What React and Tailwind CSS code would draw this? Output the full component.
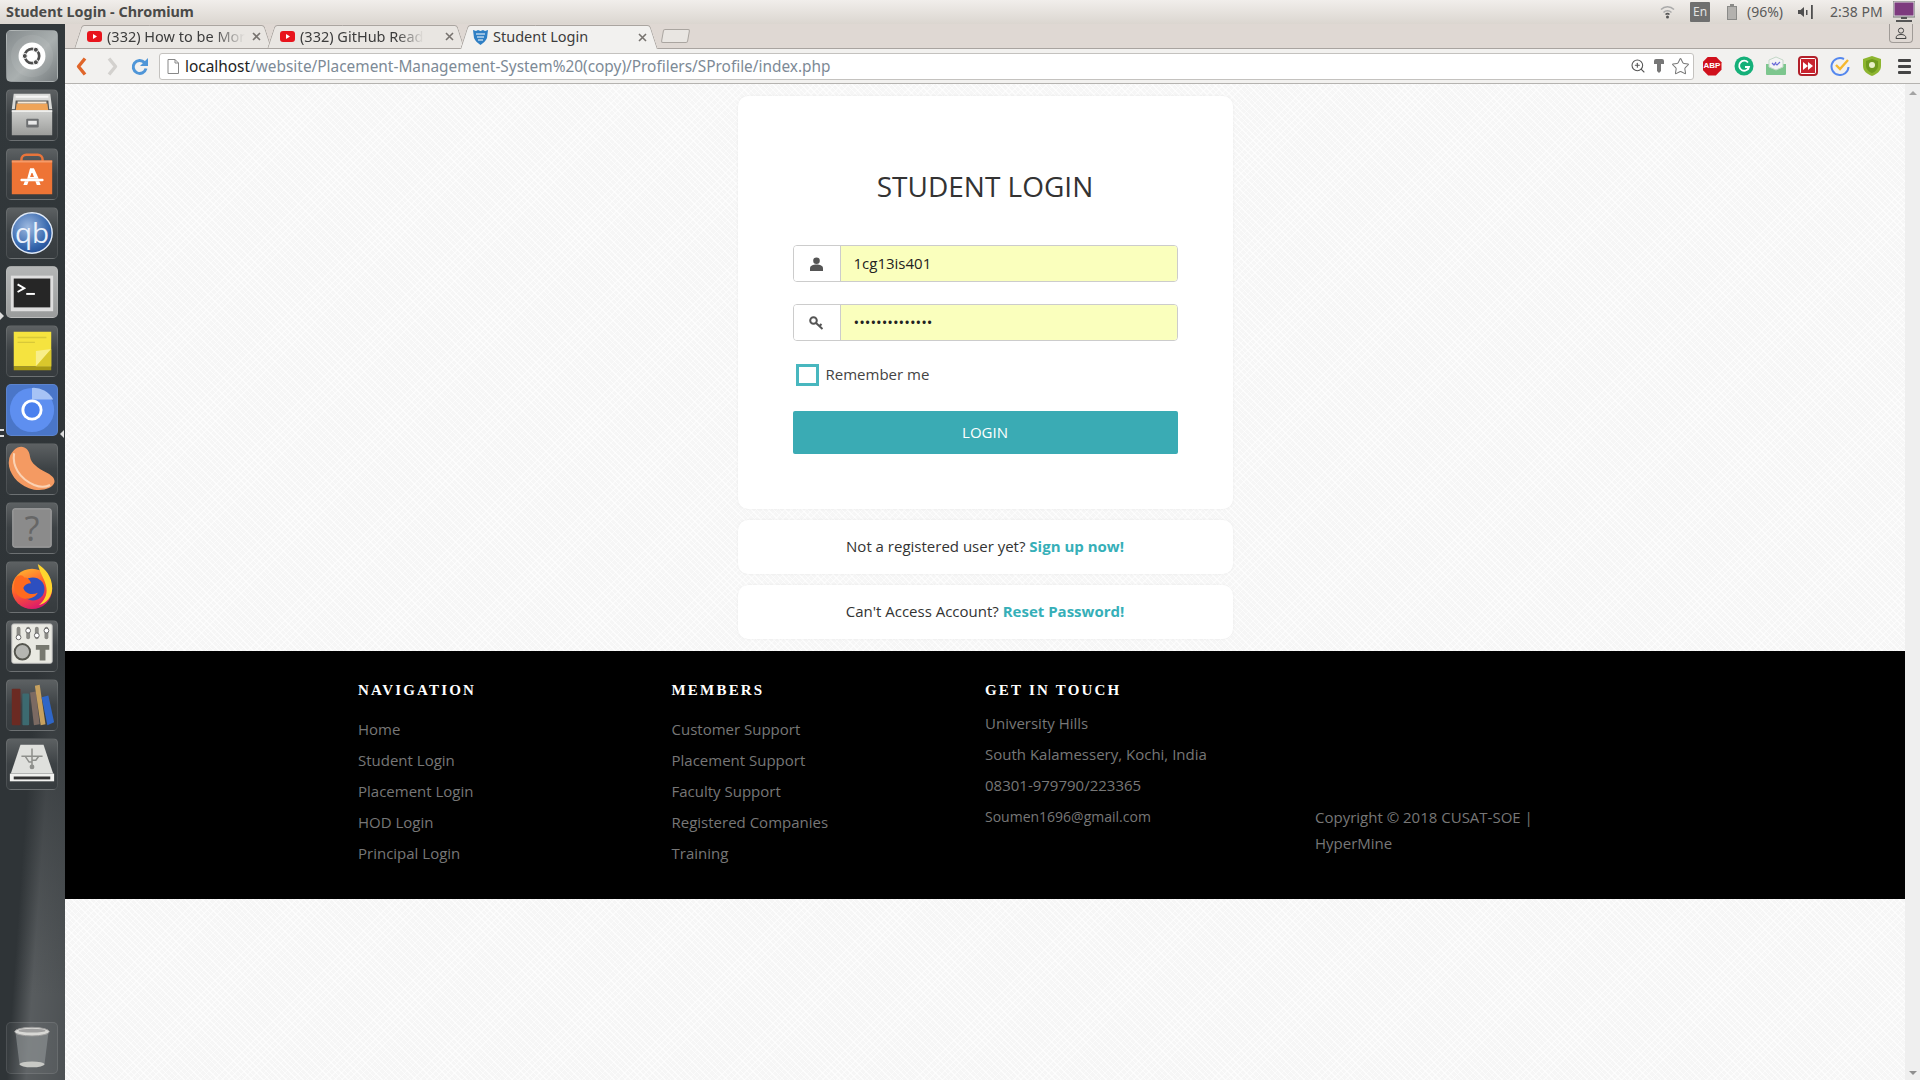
import { Star, ZoomIn } from "lucide-react";

const chromeFont = "font-['Noto_Sans','Open_Sans',sans-serif]";

const navLinks = ["Home", "Student Login", "Placement Login", "HOD Login", "Principal Login"];
const memberLinks = ["Customer Support", "Placement Support", "Faculty Support", "Registered Companies", "Training"];
const contactLines = ["University Hills", "South Kalamessery, Kochi, India", "08301-979790/223365"];

function Tile({ children, active, className = "" }) {
  return (
    <div
      className={`w-[52px] h-[52px] shrink-0 rounded-[5px] border border-white/10 overflow-hidden flex items-center justify-center ${
        active || "bg-[linear-gradient(180deg,#5d6163,#3d4245_50%,#363b3e)]"
      } ${className}`}
    >
      <svg width="52" height="52" viewBox="0 0 52 52">
        {children}
      </svg>
    </div>
  );
}

function Launcher() {
  return (
    <div className="w-[65px] shrink-0 flex flex-col gap-[7px] pt-[6px] pb-[6px] items-start pl-[6px] relative bg-[#2f3437] [background-image:linear-gradient(180deg,#32383b_0,#2f3437_58%,transparent_92%),linear-gradient(94deg,transparent_58%,rgba(255,255,255,0.2)_72%,rgba(255,255,255,0.14)_100%)]">
      <Tile active="bg-[linear-gradient(135deg,#868c8e,#aab0b0_55%,#777d7f)]">
        <circle cx="26" cy="26" r="22" fill="#fff" opacity=".07" />
        <circle cx="26" cy="26" r="14" fill="#fff" />
        <circle cx="26" cy="26" r="7.5" fill="none" stroke="#4d4d4d" strokeWidth="2.8" />
        <circle cx="18.500" cy="26" r="2.6" fill="#4d4d4d" stroke="#fff" />
        <circle cx="30" cy="19.500" r="2.6" fill="#4d4d4d" stroke="#fff" />
        <circle cx="30" cy="32.500" r="2.6" fill="#4d4d4d" stroke="#fff" />
      </Tile>
      <Tile>
        <defs>
          <linearGradient id="cab" x1="0" y1="0" x2="0" y2="1">
            <stop offset="0" stopColor="#cfd0ce" />
            <stop offset="1" stopColor="#9c9d9b" />
          </linearGradient>
        </defs>
        <path d="M7 4h38l2 16H5z" fill="#d9dad8" />
        <path d="M9 6h34v2H9z" fill="#f5f5f4" />
        <path d="M9 11h34l1 10H8z" fill="#5a5a58" />
        <path d="M10 14h32l1 8H9z" fill="#efa458" />
        <path d="M11 12h30v2H11z" fill="#f6e8d6" />
        <path d="M5 21h42v26H5z" fill="url(#cab)" />
        <path d="M5 21h42v2H5z" fill="#eeeeec" />
        <rect x="20" y="30" width="13" height="9" rx="1" fill="#6d6f71" />
        <rect x="22" y="32" width="9" height="4" fill="#e9e9e9" />
      </Tile>
      <Tile>
        <path d="M15 14v-3a5 5 0 0 1 5-5h12a5 5 0 0 1 5 5v3" fill="none" stroke="#e8743b" strokeWidth="2.6" />
        <path d="M5 12h42v35H5z" fill="#ee7435" />
        <path d="M5 12h42v2H5z" fill="#f59a68" />
        <path d="M24 20h4l5 11h-12z" fill="#fff" />
        <path d="M25.500 25h1l1.500 4h-4z" fill="#ee7435" />
        <rect x="14" y="31" width="24" height="2.600" rx="1" fill="#fff" />
        <path d="M18.500 33.500h4l-1.500 4h-4zM29.500 33.500h4l1.500 4h-4z" fill="#fff" />
      </Tile>
      <Tile>
        <defs>
          <radialGradient id="qbg" cx="0.4" cy="0.35" r="0.8">
            <stop offset="0" stopColor="#9db9e0" />
            <stop offset="0.65" stopColor="#3465ac" />
            <stop offset="1" stopColor="#1b3f86" />
          </radialGradient>
        </defs>
        <circle cx="26" cy="26" r="21" fill="url(#qbg)" stroke="#dfe9f7" strokeWidth="1.500" />
        <text x="26" y="36" textAnchor="middle" fontSize="29" fill="#eaf1fb" fontFamily="Open Sans, sans-serif">qb</text>
      </Tile>
      <Tile active="bg-[linear-gradient(180deg,#b4b6b6,#9a9c9c)]">
        <rect x="4" y="9" width="44" height="37" fill="#dedede" />
        <rect x="7" y="12" width="38" height="30" fill="#262626" />
        <path d="M11 18l7 4-7 4" fill="none" stroke="#fff" strokeWidth="2" />
        <rect x="20" y="27" width="9" height="2" fill="#fff" />
      </Tile>
      <Tile>
        <path d="M7 6h39v36H7z" fill="#f5e33f" />
        <path d="M7 42h39v4H7z" fill="#a79814" />
        <path d="M11 12h30M11 17h18" stroke="#d8c838" strokeWidth="1.500" />
        <path d="M46 24L30 42V26z" fill="#f8ee8a" />
        <path d="M30 42h16V24z" fill="#d9c72c" />
      </Tile>
      <Tile active="bg-[#4a76c8]">
        <circle cx="26" cy="26" r="23" fill="#5e8ff0" />
        <path d="M26 15h22a23 23 0 0 0-22-12z" fill="#a7c3f5" />
        <circle cx="26" cy="26" r="11" fill="#fff" />
        <circle cx="26" cy="26" r="8" fill="#4a80ee" />
      </Tile>
      <Tile>
        <g transform="translate(-2.500 -2.500) scale(1.100)">
          <path d="M9 8c6-6 14-3 15 6 1 7 8 11 15 15 6 3 9 6 8 10-2 6-14 9-24 5C11 40 3 28 4 19c.3-5 2-8 5-11z" fill="#f49a62" />
          <path d="M9 11c-2 12 5 24 19 30 5 2 11 2 15 0" fill="none" stroke="#fad2b4" strokeWidth="2" />
        </g>
      </Tile>
      <Tile>
        <rect x="6" y="6" width="40" height="40" rx="2" fill="#8b8b8b" stroke="#aaa" />
        <text x="26" y="39" textAnchor="middle" fontSize="36" fill="#666" fontFamily="Open Sans, sans-serif">?</text>
      </Tile>
      <Tile>
        <defs>
          <linearGradient id="ffg" x1="0.2" y1="0" x2="0.6" y2="1">
            <stop offset="0" stopColor="#ffb52e" />
            <stop offset="0.5" stopColor="#ff5b2e" />
            <stop offset="1" stopColor="#d9176e" />
          </linearGradient>
        </defs>
        <circle cx="26" cy="28" r="21" fill="url(#ffg)" />
        <path d="M32 2c8 5 15 13 15 25 0 9-6 16-14 18 6-5 9-11 8-18-1-9-7-15-9-25z" fill="#ffd52e" />
        <circle cx="27" cy="28" r="12" fill="#2d4fc0" />
        <path d="M9 16c4-3 7-3 9 0 3 0 6 2 7 6-4 0-7 2-8 5 2 6 9 8 15 5-3 6-13 9-20 3C7 31 6 23 9 16z" fill="#ff6a1f" />
      </Tile>
      <Tile>
        <rect x="5" y="3" width="42" height="41" rx="2" fill="#e9e9e2" stroke="#bbb" />
        <rect x="10" y="6" width="4" height="13" rx="2" fill="#8a8a85" />
        <rect x="20" y="6" width="4" height="13" rx="2" fill="#8a8a85" />
        <rect x="29" y="6" width="4" height="13" rx="2" fill="#8a8a85" />
        <rect x="39" y="6" width="4" height="13" rx="2" fill="#8a8a85" />
        <circle cx="12" cy="17" r="2.500" fill="#fff" stroke="#666" />
        <circle cx="22" cy="10" r="2.500" fill="#fff" stroke="#666" />
        <circle cx="31" cy="15" r="2.500" fill="#fff" stroke="#666" />
        <circle cx="41" cy="10" r="2.500" fill="#fff" stroke="#666" />
        <circle cx="16" cy="32" r="8" fill="#b5b6b2" stroke="#55564f" strokeWidth="2" />
        <path d="M30 25h14v5h-4v11h-6V30h-4z" fill="#77786f" />
      </Tile>
      <Tile>
        <rect x="5" y="9" width="9" height="38" rx="1" fill="#6b2a22" />
        <rect x="16" y="14" width="7" height="33" rx="1" fill="#3c6a70" />
        <path d="M24 13l6-1 4 34-6 1z" fill="#7b6a62" />
        <path d="M29 6l5-1 6 41-5 1z" fill="#c7a15f" />
        <path d="M36 18l7-2 6 28-7 3z" fill="#2f66c7" />
      </Tile>
      <Tile>
        <path d="M14 6h24l10 30H4z" fill="#dfe0dd" />
        <rect x="3" y="36" width="46" height="8" fill="#f1f1ef" />
        <rect x="7" y="39" width="38" height="3" fill="#333" />
        <path d="M26 10v20M15 18h22M19 18l4 6h3M33 18l-3 4h-4" fill="none" stroke="#8e8f8c" strokeWidth="1.600" />
        <circle cx="26" cy="29" r="2.500" fill="#8e8f8c" />
      </Tile>
      <Tile active="bg-white/5 mt-auto">
        <path d="M9 11l4 32c0 3 26 3 26 0l4-32z" fill="#8d9294" opacity=".65" />
        <ellipse cx="26" cy="43" rx="13" ry="3" fill="#c8c9c5" />
        <ellipse cx="26" cy="9" rx="18" ry="4.500" fill="#d8d8d5" stroke="#999" />
        <ellipse cx="26" cy="8" rx="14" ry="2" fill="#a0a0a0" />
      </Tile>
      {/* running pips on the launcher */}
      <span className="absolute left-0 top-[288px] border-y-[4px] border-y-transparent border-l-[4px] border-l-[#dddddd]" />
      <span className="absolute left-0 top-[405px] w-[4px] h-[2px] bg-[#dddddd]" />
      <span className="absolute left-0 top-[411px] w-[4px] h-[2px] bg-[#dddddd]" />
      <span className="absolute right-[1px] top-[406px] border-y-[4px] border-y-transparent border-r-[4px] border-r-[#dddddd]" />
    </div>
  );
}

function YoutubeIcon() {
  return (
    <svg width="15" height="13" viewBox="0 0 15 13" className="shrink-0">
      <rect y="1" width="15" height="11" rx="3" fill="#e8141c" />
      <path d="M6 4l4 2.500L6 9z" fill="#fff" />
    </svg>
  );
}

function ShieldIcon() {
  return (
    <svg width="15" height="16" viewBox="0 0 15 16" className="shrink-0">
      <path d="M0 1l3 1 2-1 2.500 1L10 1l2 1 3-1-1 8c-1 3-4 5-6.500 7C5 14 2 12 1 9z" fill="#2f7fc4" />
      <path d="M3 5h9M4 8h7M5 11h5" stroke="#fff" strokeWidth="1" />
    </svg>
  );
}

function Tab({ icon, title, active, fade }) {
  return (
    <div
      className={`relative isolate w-[198px] h-[23px] -ml-[5px] first:ml-0 flex items-center pl-[13px] pr-[10px] text-[14.500px] text-[#3c3c3c] ${
        active ? "z-10 h-[24px] -mb-px" : ""
      } before:content-[''] before:absolute before:-z-10 before:inset-y-0 before:left-[4px] before:right-[40%] before:-skew-x-[18deg] before:border-l before:border-t before:rounded-tl-[3px] before:border-[#aaa5a0] after:content-[''] after:absolute after:-z-10 after:inset-y-0 after:right-[4px] after:left-[40%] after:skew-x-[18deg] after:border-r after:border-t after:rounded-tr-[3px] after:border-[#aaa5a0] ${
        active ? "before:bg-[#f2f1ef] after:bg-[#f2f1ef]" : "before:bg-[#e9e6e2] after:bg-[#e9e6e2]"
      }`}
    >
      {icon}
      <span
        className={`ml-[5px] whitespace-nowrap ${
          fade ? "[mask-image:linear-gradient(to_right,black_78%,transparent)]" : ""
        }`}
      >
        {title}
      </span>
      <svg width="9" height="9" viewBox="0 0 9 9" className="ml-auto mr-[1px] shrink-0">
        <path d="M1 1l7 7M8 1L1 8" stroke="#77736f" strokeWidth="1.600" />
      </svg>
    </div>
  );
}

function TabStrip() {
  return (
    <div className={`h-[25px] shrink-0 flex items-end pl-[9px] bg-[#dfd8d3] border-b border-[#a9a4a0] ${chromeFont}`}>
      <Tab icon={<YoutubeIcon />} title="(332) How to be Mor" fade />
      <Tab icon={<YoutubeIcon />} title="(332) GitHub Read" fade />
      <Tab icon={<ShieldIcon />} title="Student Login" active />
      <div className="ml-[4px] mb-[5px] w-[27px] h-[14px] -skew-x-[10deg] rounded-[2px] border border-[#aaa5a0] bg-[#e9e6e2]" />
      <div className="ml-auto mr-[7px] self-start w-[24px] h-[19px] border border-t-0 border-[#a09b97] rounded-b-[4px] flex items-center justify-center">
        <svg width="12" height="12" viewBox="0 0 12 12">
          <circle cx="6" cy="3.600" r="2.600" fill="none" stroke="#444" />
          <path d="M1 11.500c0-3 2-4 5-4s5 1 5 4z" fill="none" stroke="#444" />
        </svg>
      </div>
    </div>
  );
}

function Extensions() {
  return (
    <>
      <div className="w-[32px] flex justify-center">
        <div className="w-[19px] h-[19px] bg-[#d0101c] [clip-path:polygon(30%_0,70%_0,100%_30%,100%_70%,70%_100%,30%_100%,0_70%,0_30%)] flex items-center justify-center text-white text-[8px] font-bold font-['Liberation_Sans',sans-serif]">
          ABP
        </div>
      </div>
      <div className="w-[32px] flex justify-center">
        <svg width="20" height="20" viewBox="0 0 20 20">
          <circle cx="10" cy="10" r="9.500" fill="#15b079" />
          <path d="M14 6.500A5 5 0 1 0 15 11h-4" fill="none" stroke="#fff" strokeWidth="1.800" />
          <path d="M13.500 11v3l2-1z" fill="#fff" />
        </svg>
      </div>
      <div className="w-[32px] flex justify-center">
        <svg width="20" height="20" viewBox="0 0 20 20">
          <path d="M0 8h20v10a1 1 0 0 1-1 1H1a1 1 0 0 1-1-1z" fill="#7dc68e" />
          <path d="M3 11V4l7-3 7 3v7l-7 3z" fill="#f4f4f4" stroke="#c4d8c8" />
          <path d="M6 7l2 2 2-3M9 7l2 2 3-3" fill="none" stroke="#6a6ad8" strokeWidth="1.200" />
        </svg>
      </div>
      <div className="w-[32px] flex justify-center">
        <svg width="20" height="20" viewBox="0 0 20 20">
          <rect x="1" y="1" width="18" height="18" rx="3" fill="#fff" stroke="#b2202a" strokeWidth="2" />
          <rect x="3" y="3" width="14" height="14" fill="#c8242f" />
          <path d="M5 6l5 4-5 4zM10 6l5 4-5 4z" fill="#fff" />
        </svg>
      </div>
      <div className="w-[32px] flex justify-center">
        <svg width="20" height="20" viewBox="0 0 20 20">
          <path d="M14 3A8.500 8.500 0 1 0 18.500 11" fill="none" stroke="#5588ee" strokeWidth="2" />
          <path d="M6 9l4 4 8-9" fill="none" stroke="#f5b82e" strokeWidth="2.400" />
        </svg>
      </div>
      <div className="w-[32px] flex justify-center">
        <svg width="18" height="20" viewBox="0 0 18 20">
          <path d="M9 0l9 3v7c0 5-4 8-9 10-5-2-9-5-9-10V3z" fill="#8db52f" />
          <path d="M9 3l6 2v5c0 3-3 6-6 7-3-1-6-4-6-7V5z" fill="#6f9a1e" />
          <circle cx="9" cy="9" r="3" fill="#e8f0c8" />
        </svg>
      </div>
      <div className="w-[32px] flex flex-col items-center gap-[3px]">
        <span className="w-[13px] h-[3px] rounded-[1px] bg-[#444]" />
        <span className="w-[13px] h-[3px] rounded-[1px] bg-[#444]" />
        <span className="w-[13px] h-[3px] rounded-[1px] bg-[#444]" />
      </div>
    </>
  );
}

function Toolbar() {
  return (
    <div className={`h-[35px] shrink-0 flex items-center pl-[2px] bg-[#f2f1ef] border-b border-[#b5b3b0] ${chromeFont}`}>
      <div className="w-[30px] flex justify-center">
        <svg width="12" height="19" viewBox="0 0 12 19">
          <path d="M9 1.500L2.500 9.500 9 17.500" fill="none" stroke="#e0662a" strokeWidth="3.400" strokeLinejoin="round" />
        </svg>
      </div>
      <div className="w-[30px] flex justify-center">
        <svg width="12" height="19" viewBox="0 0 12 19">
          <path d="M3 1.500L9.500 9.500 3 17.500" fill="none" stroke="#d3d1ce" strokeWidth="3.400" strokeLinejoin="round" />
        </svg>
      </div>
      <div className="w-[24px] flex justify-center">
        <svg width="19" height="19" viewBox="0 0 19 19">
          <path d="M14.500 5.500a6.500 6.500 0 1 0 1.500 6" fill="none" stroke="#4f96d8" strokeWidth="3" />
          <path d="M18 1v8h-8z" fill="#4f96d8" />
        </svg>
      </div>
      <div className="ml-[8px] flex-1 h-[27px] flex items-center bg-white border border-[#c4c2bf] rounded-[3px] pl-[7px] pr-[3px] text-[15.400px] whitespace-nowrap">
        <svg width="12" height="15" viewBox="0 0 12 15" className="shrink-0">
          <path d="M1 .5h7l3.500 3.500v10.500H1zM8 .5V4h3.500" fill="#fff" stroke="#888" />
        </svg>
        <span className="ml-[6px] mt-[1px] text-[#222]">localhost</span>
        <span className="mt-[1px] text-[#7d8a96]">/website/Placement-Management-System%20(copy)/Profilers/SProfile/index.php</span>
        <div className="ml-auto flex items-center">
          <ZoomIn size={16} color="#555" strokeWidth={1.600} />
          <svg width="10" height="15" viewBox="0 0 10 15" className="ml-[8px]">
            <path d="M2 0h6a2 2 0 0 1 2 2v3H7v7l-2 2-2-2V5H0V2a2 2 0 0 1 2-2z" fill="#777" />
          </svg>
          <Star size={19} color="#777" strokeWidth={1.300} className="ml-[7px]" />
        </div>
      </div>
      <div className="ml-[2px] flex items-center">
        <Extensions />
      </div>
    </div>
  );
}

function InputRow({ icon, type, value }) {
  return (
    <div className="flex h-[37px] rounded-[4px] border border-[#cccccc] overflow-hidden">
      <div className="w-[47px] shrink-0 bg-white border-r border-[#cccccc] flex items-center justify-center">{icon}</div>
      <input
        type={type}
        defaultValue={value}
        readOnly
        className="flex-1 min-w-0 bg-[#faffbd] pl-[13px] text-[15px] text-[#222] outline-none"
      />
    </div>
  );
}

function Footer() {
  const heading = "font-['Liberation_Serif',serif] font-bold text-[15px] leading-[22px] tracking-[2.200px] text-white";
  return (
    <div className="h-[248px] mt-[12px] shrink-0 bg-black text-[15px] text-[#777777] pl-[293px] pt-[28px] grid grid-cols-[313.500px_313.500px_330px_240px]">
      <div>
        <h4 className={heading}>NAVIGATION</h4>
        <ul className="mt-[13px] leading-[31px]">
          {navLinks.map((l) => (
            <li key={l}>{l}</li>
          ))}
        </ul>
      </div>
      <div>
        <h4 className={heading}>MEMBERS</h4>
        <ul className="mt-[13px] leading-[31px]">
          {memberLinks.map((l) => (
            <li key={l}>{l}</li>
          ))}
        </ul>
      </div>
      <div>
        <h4 className={heading}>GET IN TOUCH</h4>
        <ul className="mt-[7px] leading-[31px]">
          {contactLines.map((l) => (
            <li key={l}>{l}</li>
          ))}
          <li className="text-[14px]">Soumen1696@gmail.com</li>
        </ul>
      </div>
      <p className="pt-[125px] leading-[26px]">Copyright © 2018 CUSAT-SOE | HyperMine</p>
    </div>
  );
}

function LoginPage() {
  const smallCard = "w-[495px] h-[54px] mx-auto mt-[11px] pb-[2px] bg-white rounded-[10px] shadow-[0_0_3px_rgba(0,0,0,0.06)] flex items-center justify-center text-[15px] text-[#333]";
  return (
    <div className="flex-1 min-w-0 flex flex-col bg-[#f6f6f6] [background-image:repeating-linear-gradient(45deg,rgba(255,255,255,0.7)_0,rgba(255,255,255,0.7)_1px,transparent_1px,transparent_4px),repeating-linear-gradient(-45deg,rgba(255,255,255,0.5)_0,rgba(255,255,255,0.5)_1px,transparent_1px,transparent_5px)] font-['Open_Sans',sans-serif]">
      <div className="w-[495px] h-[413px] mx-auto mt-[12px] bg-white rounded-[10px] shadow-[0_0_3px_rgba(0,0,0,0.06)] px-[55px] pt-[54px]">
        <h1 className="text-center text-[28px] leading-[72px] text-[#333] mb-[23px]">STUDENT LOGIN</h1>
        <InputRow
          type="text"
          value="1cg13is401"
          icon={
            <svg width="13" height="14" viewBox="0 0 13 14">
              <circle cx="6.500" cy="3.800" r="3.300" fill="#555" />
              <path d="M0 14v-2.500C0 8.500 3 7.500 6.500 7.500S13 8.500 13 11.500V14z" fill="#555" />
            </svg>
          }
        />
        <div className="h-[22px]" />
        <InputRow
          type="password"
          value="abcdefghijklmn"
          icon={
            <svg width="15" height="14" viewBox="0 0 15 14">
              <circle cx="4.500" cy="4.500" r="3.300" fill="none" stroke="#555" strokeWidth="2" />
              <path d="M7 7l6.500 6M10.500 10l2-2" fill="none" stroke="#555" strokeWidth="2" />
            </svg>
          }
        />
        <label className="mt-[23px] ml-[3px] h-[22px] flex items-center text-[15px] text-[#444]">
          <input type="checkbox" className="appearance-none w-[23px] h-[22px] border-[3px] border-[#48b7bf] bg-white" />
          <span className="ml-[7px] -mt-[2px]">Remember me</span>
        </label>
        <button className="mt-[25px] w-full h-[43px] rounded-[2px] bg-[#3aabb4] text-white text-[15px]">LOGIN</button>
      </div>
      <div className={smallCard}>
        <span>
          Not a registered user yet? <a className="font-bold text-[#36afb8]">Sign up now!</a>
        </span>
      </div>
      <div className={smallCard}>
        <span>
          Can't Access Account? <a className="font-bold text-[#36afb8]">Reset Password!</a>
        </span>
      </div>
      <Footer />
    </div>
  );
}

export default function App() {
  return (
    <div className="w-[1920px] h-[1080px] overflow-hidden flex flex-col">
      <div className={`h-[24px] shrink-0 flex items-center pl-[6px] pr-[5px] pb-[1px] bg-[linear-gradient(180deg,#f1eeeb,#dbd6d0)] text-[14.400px] ${chromeFont}`}>
        <span className="flex-1 font-bold text-[#4a4a48]">Student Login - Chromium</span>
        <svg width="15" height="15" viewBox="0 0 15 15">
          <path d="M1 5.500a9 9 0 0 1 13 0M3.500 8.500a5.500 5.500 0 0 1 8 0" fill="none" stroke="#aaa" strokeWidth="1.500" />
          <path d="M5.500 10.500a3 3 0 0 1 4 0" fill="none" stroke="#555" strokeWidth="1.500" />
          <circle cx="7.500" cy="13" r="1.500" fill="#555" />
        </svg>
        <span className="ml-[15px] w-[20px] h-[20px] bg-[#6f6f6f] rounded-[1px] text-[#e2e2e2] text-[12px] flex items-center justify-center">En</span>
        <svg width="10" height="16" viewBox="0 0 10 16" className="ml-[17px]">
          <path d="M3 0h4v2h3v14H0V2h3z" fill="#8a8a88" />
          <rect x="1" y="3" width="8" height="12" fill="#b3b1ae" />
        </svg>
        <span className="ml-[10px] w-[37px] whitespace-nowrap text-[14px] text-[#5a5a5a]">(96%)</span>
        <svg width="15" height="14" viewBox="0 0 15 14" className="ml-[14px]">
          <path d="M0 5h2.500L6 2v10L2.500 9H0z" fill="#4f4f4f" />
          <rect x="8" y="5" width="1.500" height="5" fill="#4f4f4f" />
          <rect x="13" y="0" width="1.800" height="14" fill="#4f4f4f" />
        </svg>
        <span className="ml-[17px] w-[53px] whitespace-nowrap text-[14px] text-[#5a5a5a]">2:38 PM</span>
        <svg width="22" height="21" viewBox="0 0 22 21" className="ml-[10px]">
          <rect x="0" y="0" width="22" height="16" fill="#dcdcdc" stroke="#777" />
          <rect x="1.500" y="1.500" width="19" height="13" fill="#7d3a7e" />
          <path d="M8 16h6v2H8zM3 19h16v2H3z" fill="#555" />
        </svg>
      </div>
      <div className="flex-1 min-h-0 flex">
        <Launcher />
        <div className="flex-1 min-w-0 flex flex-col">
          <TabStrip />
          <Toolbar />
          <div className="flex-1 min-h-0 flex">
            <LoginPage />
            <div className="w-[15px] shrink-0 bg-[#efefef] flex flex-col items-center justify-between pt-[7px] pb-[5px]">
              <span className="h-0 border-x-[4px] border-x-transparent border-b-[4px] border-b-[#a3a3a3]" />
              <span className="h-0 border-x-[4px] border-x-transparent border-t-[4px] border-t-[#8f8f8f]" />
            </div>
          </div>
        </div>
      </div>
    </div>
  );
}
